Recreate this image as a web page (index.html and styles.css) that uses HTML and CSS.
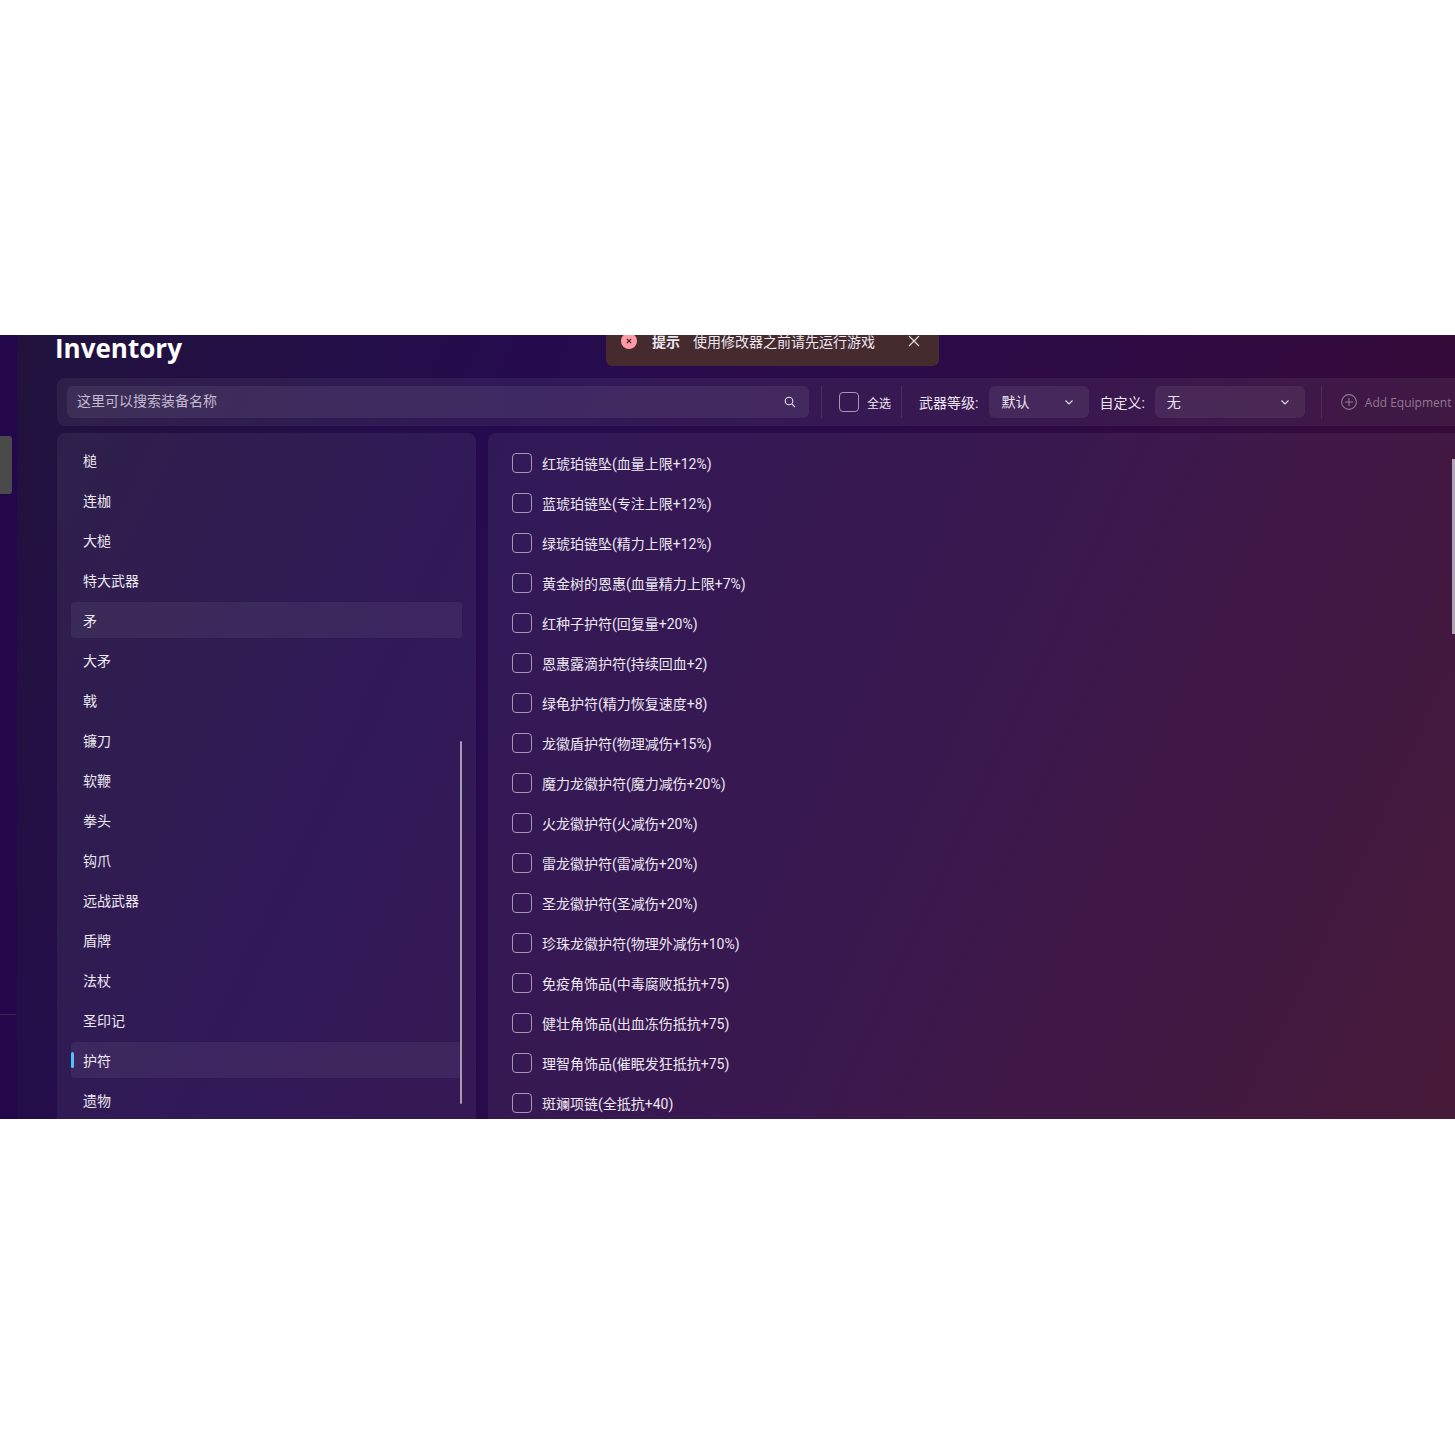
FILE: index.html
```html
<!DOCTYPE html>
<html lang="en">
<head>
    <meta charset="UTF-8">
    <meta name="viewport" content="width=device-width, initial-scale=1.0">
    <title>Inventory</title>
    <link rel="stylesheet" href="styles.css">
</head>
<body>
    <div class="stage">
        <aside class="rail">
            <div class="rail-thumb"></div>
            <div class="rail-line"></div>
        </aside>
        <main class="main">
            <h1 class="title">Inventory</h1>
            <div class="toolbar">
                <div class="search">
                    <span class="search-text">这里可以搜索装备名称</span>
                    <svg class="icon" viewBox="0 0 12 12" width="12" height="12"><circle cx="5" cy="5" r="3.8"/><path d="M7.8 7.8L11 11"/></svg>
                </div>
                <div class="divider"></div>
                <label class="select-all"><span class="check"></span><span>全选</span></label>
                <div class="divider divider-near"></div>
                <span class="field-label level-label">武器等级:</span>
                <div class="select select-level">
                    <span class="select-text">默认</span>
                    <svg class="icon" viewBox="0 0 10 10" width="10" height="10"><path d="M1.5 3.5L5 7L8.5 3.5"/></svg>
                </div>
                <span class="field-label custom-label">自定义:</span>
                <div class="select select-custom">
                    <span class="select-text">无</span>
                    <svg class="icon" viewBox="0 0 10 10" width="10" height="10"><path d="M1.5 3.5L5 7L8.5 3.5"/></svg>
                </div>
                <div class="divider divider-add"></div>
                <div class="add-btn">
                    <svg class="icon" viewBox="0 0 16 16" width="16" height="16"><circle cx="8" cy="8" r="7.4"/><path d="M8 4v8M4 8h8"/></svg>
                    <span>Add Equipment</span>
                </div>
            </div>
            <div class="panels">
                <div class="panel category-panel">
                    <div class="cat-item">槌</div>
                    <div class="cat-item">连枷</div>
                    <div class="cat-item">大槌</div>
                    <div class="cat-item">特大武器</div>
                    <div class="cat-item cat-hover">矛</div>
                    <div class="cat-item">大矛</div>
                    <div class="cat-item">戟</div>
                    <div class="cat-item">镰刀</div>
                    <div class="cat-item">软鞭</div>
                    <div class="cat-item">拳头</div>
                    <div class="cat-item">钩爪</div>
                    <div class="cat-item">远战武器</div>
                    <div class="cat-item">盾牌</div>
                    <div class="cat-item">法杖</div>
                    <div class="cat-item">圣印记</div>
                    <div class="cat-item cat-active">护符</div>
                    <div class="cat-item">遗物</div>
                    <div class="panel-scroll"></div>
                </div>
                <div class="panel item-panel">
                    <label class="item"><span class="check"></span><span>红琥珀链坠(血量上限+12%)</span></label>
                    <label class="item"><span class="check"></span><span>蓝琥珀链坠(专注上限+12%)</span></label>
                    <label class="item"><span class="check"></span><span>绿琥珀链坠(精力上限+12%)</span></label>
                    <label class="item"><span class="check"></span><span>黄金树的恩惠(血量精力上限+7%)</span></label>
                    <label class="item"><span class="check"></span><span>红种子护符(回复量+20%)</span></label>
                    <label class="item"><span class="check"></span><span>恩惠露滴护符(持续回血+2)</span></label>
                    <label class="item"><span class="check"></span><span>绿龟护符(精力恢复速度+8)</span></label>
                    <label class="item"><span class="check"></span><span>龙徽盾护符(物理减伤+15%)</span></label>
                    <label class="item"><span class="check"></span><span>魔力龙徽护符(魔力减伤+20%)</span></label>
                    <label class="item"><span class="check"></span><span>火龙徽护符(火减伤+20%)</span></label>
                    <label class="item"><span class="check"></span><span>雷龙徽护符(雷减伤+20%)</span></label>
                    <label class="item"><span class="check"></span><span>圣龙徽护符(圣减伤+20%)</span></label>
                    <label class="item"><span class="check"></span><span>珍珠龙徽护符(物理外减伤+10%)</span></label>
                    <label class="item"><span class="check"></span><span>免疫角饰品(中毒腐败抵抗+75)</span></label>
                    <label class="item"><span class="check"></span><span>健壮角饰品(出血冻伤抵抗+75)</span></label>
                    <label class="item"><span class="check"></span><span>理智角饰品(催眠发狂抵抗+75)</span></label>
                    <label class="item"><span class="check"></span><span>斑斓项链(全抵抗+40)</span></label>
                </div>
            </div>
            <div class="list-scroll"></div>
        </main>
        <div class="toast">
            <span class="toast-icon">
                <svg viewBox="0 0 16 16" width="16" height="16"><circle cx="8" cy="8" r="8" fill="#ff99a4"/><path d="M5.8 5.8l4.4 4.4M10.2 5.8l-4.4 4.4" stroke="#3a1a20" stroke-width="1.1"/></svg>
            </span>
            <strong class="toast-title">提示</strong>
            <span class="toast-msg">使用修改器之前请先运行游戏</span>
            <svg class="toast-close" viewBox="0 0 12 12" width="12" height="12"><path d="M1 1l10 10M11 1L1 11"/></svg>
        </div>
    </div>
</body>
</html>
```

FILE: styles.css
```css
* {
    box-sizing: border-box;
}
body {
    margin: 0;
    background: #fff;
    font-family: Roboto, "Noto Sans CJK SC", sans-serif;
    font-size: 14px;
    color: #ece7f0;
}
.stage {
    position: relative;
    display: flex;
    margin-top: 335px;
    height: 784px;
    overflow: hidden;
    background: linear-gradient(115deg, #20133c 0%, #250b4e 30%, #2d0a46 58%, #360a36 85%, #3c0c2c 100%);
}
.rail {
    position: relative;
    flex: none;
    width: 17px;
    background: #23074a;
}
.rail-thumb {
    position: absolute;
    top: 101px;
    left: 0;
    width: 12px;
    height: 58px;
    background: #4a4a4a;
    border-radius: 0 3px 3px 0;
}
.rail-line {
    position: absolute;
    top: 679px;
    left: 0;
    width: 16px;
    height: 1px;
    background: #3a2458;
}
.main {
    position: relative;
    flex: 1;
    min-width: 0;
    padding-left: 40px;
}
.title {
    margin: 0 0 0 -2px;
    height: 43px;
    font-family: "Open Sans", sans-serif;
    font-size: 26px;
    font-weight: 700;
    line-height: 26px;
    color: #fff;
}
.toolbar {
    display: flex;
    align-items: center;
    width: 1420px;
    height: 48px;
    padding-left: 10px;
    background: rgba(255, 255, 255, 0.06);
    border-radius: 8px 0 0 8px;
}
.search {
    display: flex;
    flex: none;
    justify-content: space-between;
    align-items: center;
    width: 742px;
    height: 32px;
    padding: 0 13px 0 10px;
    background: rgba(255, 255, 255, 0.07);
    border-radius: 6px;
    color: #c4bccf;
}
.search-text {
    margin-bottom: 4px;
}
.icon {
    flex: none;
    fill: none;
    stroke: #e6e1ec;
    stroke-width: 1.1;
}
.divider {
    flex: none;
    width: 1px;
    height: 32px;
    margin-left: 12px;
    background: rgba(255, 255, 255, 0.1);
}
.select-all {
    display: flex;
    align-items: center;
    gap: 8px;
    margin-left: 17px;
    font-size: 12px;
}
.check {
    flex: none;
    width: 20px;
    height: 20px;
    border: 1px solid #a596b4;
    border-radius: 4px;
}
.divider-near {
    margin-left: 10px;
}
.field-label {
    flex: none;
}
.level-label {
    margin-left: 17px;
}
.custom-label {
    margin-left: 10px;
}
.select {
    display: flex;
    flex: none;
    justify-content: space-between;
    align-items: center;
    height: 32px;
    padding: 0 15px 0 12px;
    margin-left: 10px;
    background: rgba(255, 255, 255, 0.07);
    border-radius: 6px;
}
.select-text {
    margin-bottom: 2px;
}
.select-level {
    width: 100px;
    margin-left: 11px;
}
.select-custom {
    width: 150px;
}
.divider-add {
    margin-left: 16px;
}
.add-btn {
    display: flex;
    align-items: center;
    gap: 8px;
    margin-left: 19px;
    font-family: "Open Sans", sans-serif;
    font-size: 12px;
    color: #8d7b90;
}
.add-btn .icon {
    stroke: #8d7b90;
}
.panels {
    display: flex;
    gap: 12px;
    margin-top: 7px;
}
.panel {
    background: rgba(255, 255, 255, 0.06);
    border-radius: 8px 8px 0 0;
}
.category-panel {
    position: relative;
    flex: none;
    width: 419px;
    height: 700px;
    padding: 9px 14px;
}
.cat-item {
    display: flex;
    align-items: center;
    height: 36px;
    margin-bottom: 4px;
    padding-left: 12px;
    border-radius: 4px;
}
.cat-hover,
.cat-active {
    background: rgba(255, 255, 255, 0.06);
}
.cat-active {
    position: relative;
}
.cat-active::before {
    content: "";
    position: absolute;
    top: 10px;
    left: 0;
    width: 3px;
    height: 16px;
    background: #4cc2ff;
    border-radius: 2px;
}
.panel-scroll {
    position: absolute;
    top: 308px;
    right: 14px;
    width: 2px;
    height: 363px;
    background: #a79bb3;
    border-radius: 1px;
}
.item-panel {
    flex: none;
    width: 1000px;
    height: 700px;
    padding-top: 10px;
    padding-left: 24px;
}
.item {
    display: flex;
    align-items: center;
    gap: 10px;
    height: 40px;
}
.list-scroll {
    position: absolute;
    top: 124px;
    right: 0;
    width: 3px;
    height: 175px;
    background: #b3a3b6;
}
.toast {
    position: absolute;
    top: -18px;
    left: 606px;
    display: flex;
    align-items: center;
    width: 333px;
    height: 49px;
    padding: 0 0 1px 15px;
    background: #452a2e;
    border-radius: 6px;
}
.toast-icon {
    display: flex;
    flex: none;
}
.toast-title {
    margin-left: 15px;
}
.toast-msg {
    margin-left: 13px;
}
.toast-close {
    margin-left: 33px;
    fill: none;
    stroke: #e6e1e1;
    stroke-width: 1.1;
}
```
